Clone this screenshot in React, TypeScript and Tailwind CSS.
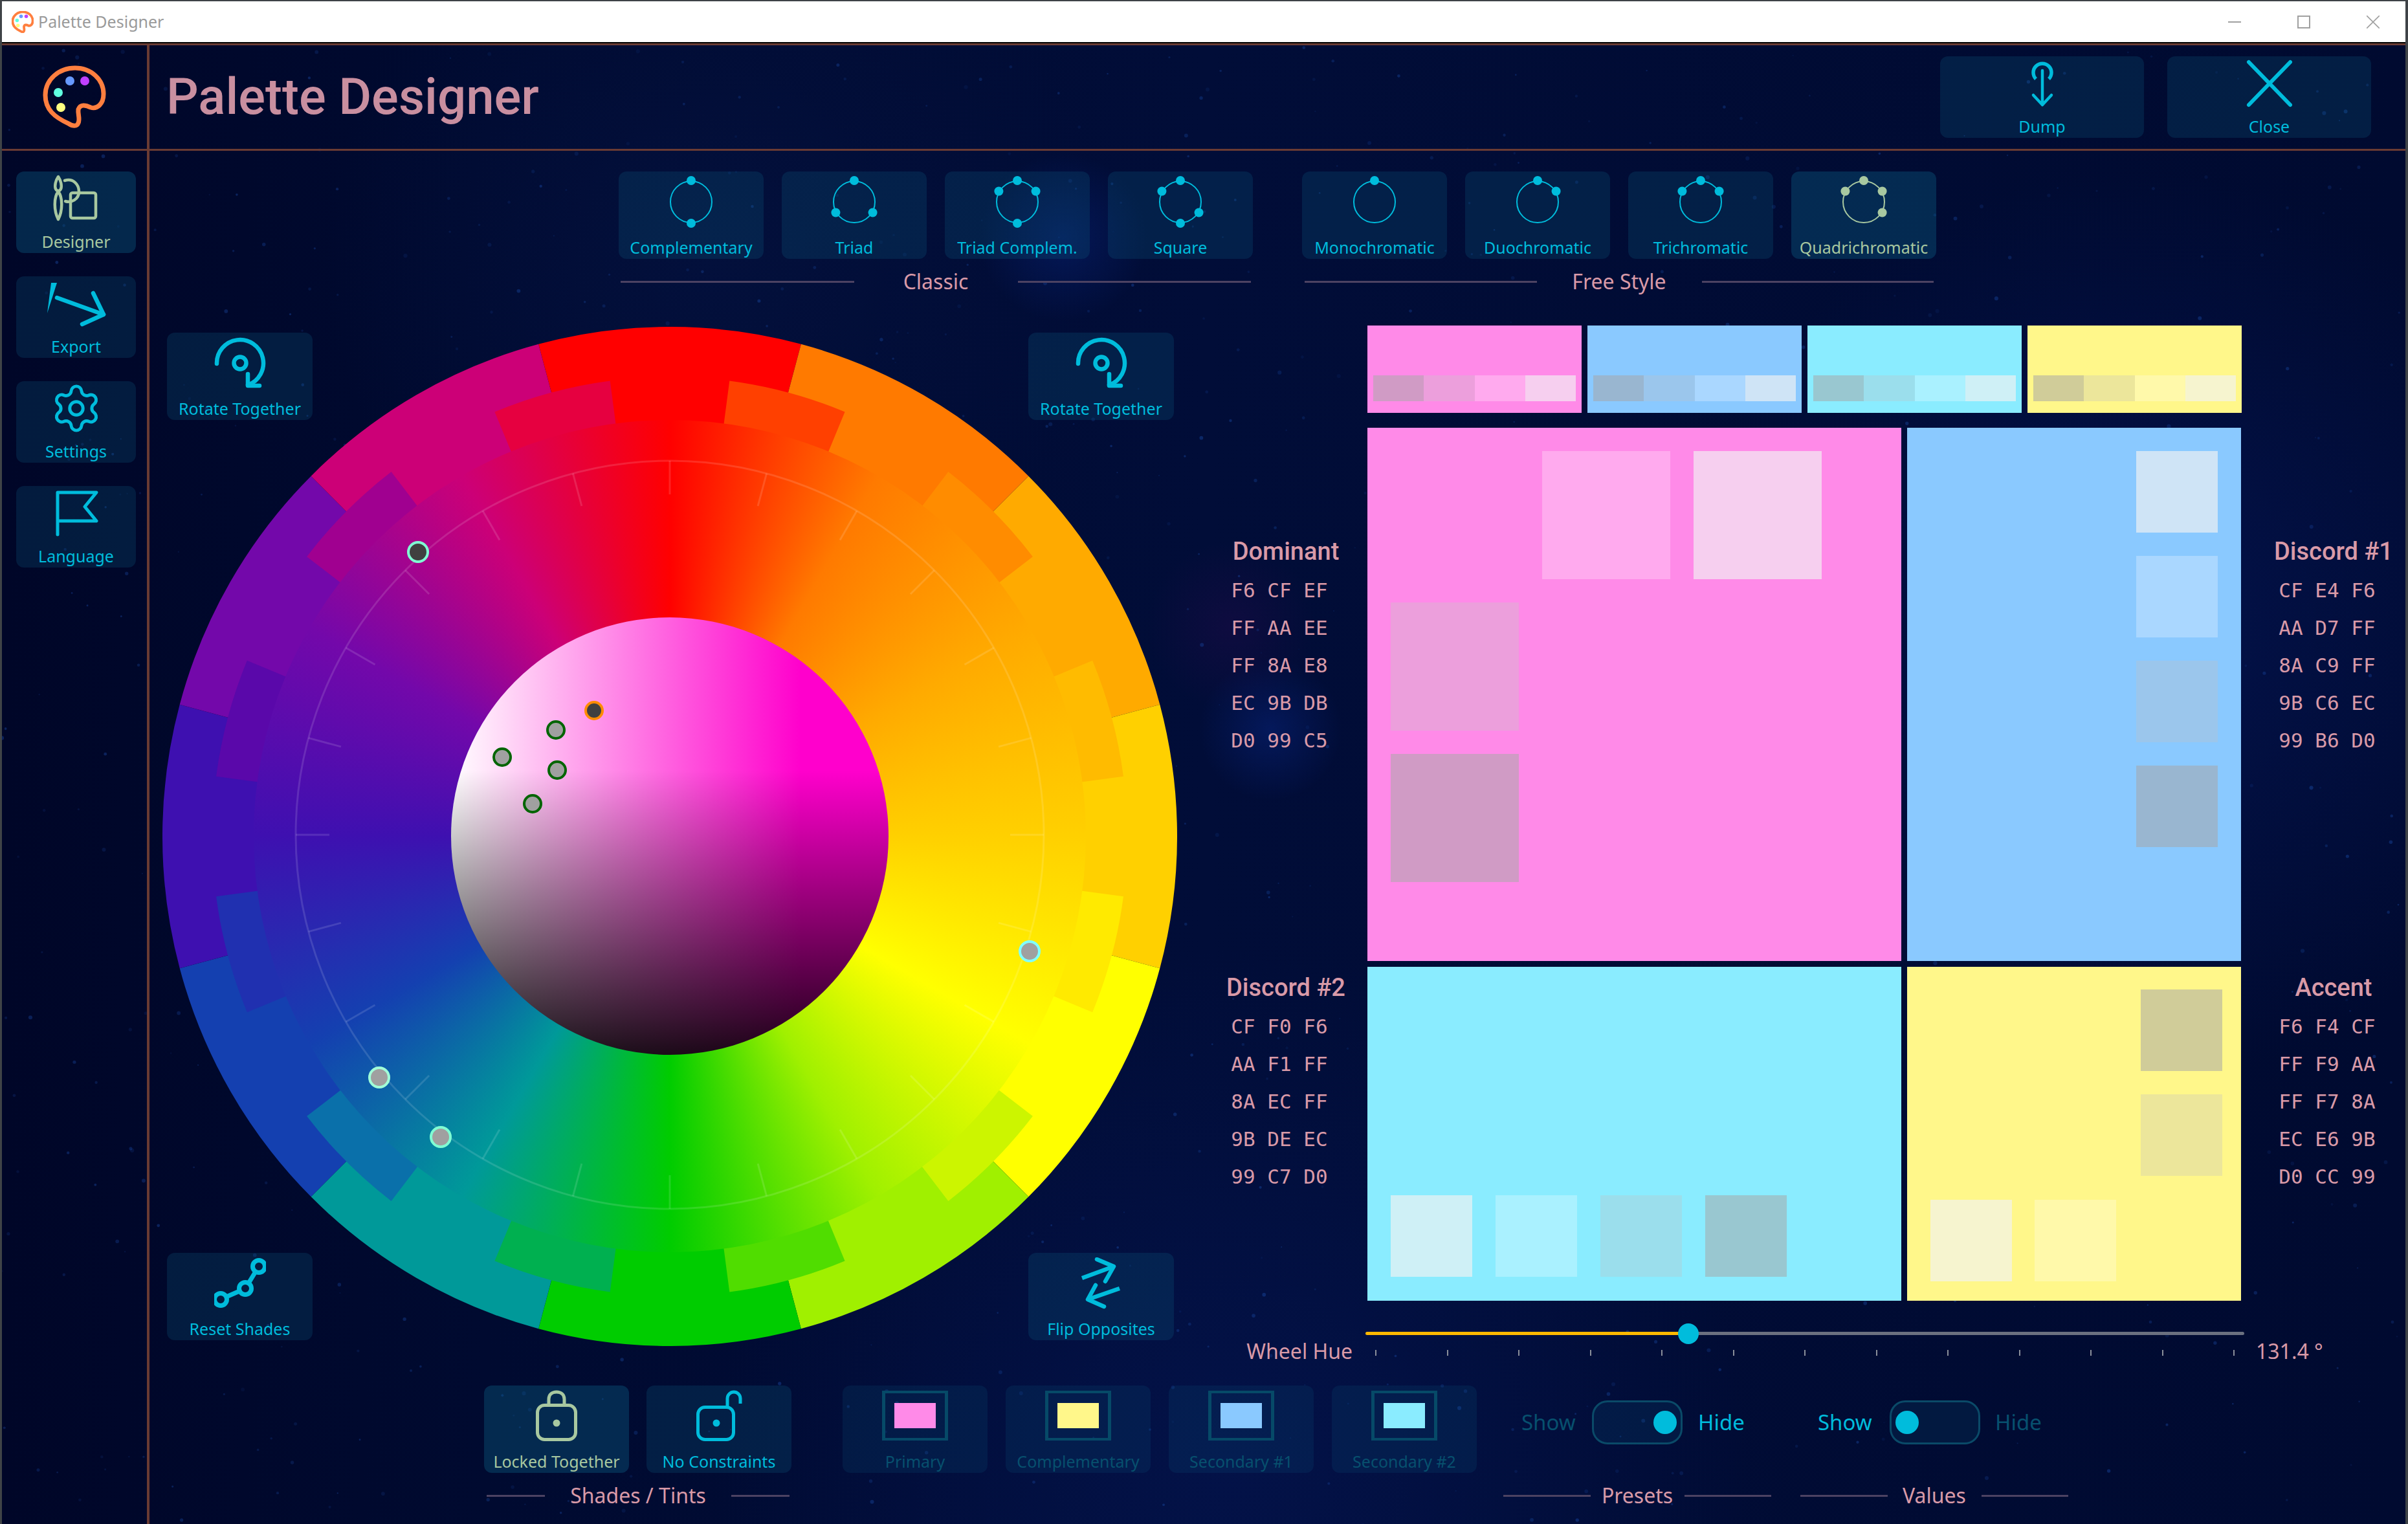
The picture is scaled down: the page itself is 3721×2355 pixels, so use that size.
import type { ReactNode } from "react";
import { Settings } from "lucide-react";

const CYAN = "#00bcdc";
const SAGE = "#a8c8a0";

const OUTER = ["#ff0000", "#ff7a00", "#ffaa00", "#ffd000", "#ffff00", "#a0f000", "#00cc00", "#009999", "#1440b0", "#3e10b0", "#7308aa", "#cc0077"];
const MID = ["#ff4000", "#ff8c00", "#ffbb00", "#ffea00", "#ccf500", "#50dd00", "#00b050", "#0a70aa", "#2030b0", "#5a08aa", "#a00090", "#e60040"];

const SHADES = {
  pink: ["#d09bc5", "#ec9fdc", "#ffaaee", "#f6cfef"],
  blue: ["#99b6d0", "#9bc6ec", "#aad7ff", "#cfe4f6"],
  cyan: ["#99c7d0", "#9bdeec", "#aaf1ff", "#cff0f6"],
  yellow: ["#d0cc99", "#ece69b", "#fff9aa", "#f6f4cf"],
};

const polar = (r: number, deg: number) => {
  const a = ((deg - 90) * Math.PI) / 180;
  return `${(784 + r * Math.cos(a)).toFixed(2)} ${(784 + r * Math.sin(a)).toFixed(2)}`;
};

const sector = (r0: number, r1: number, from: number, to: number) =>
  `M${polar(r0, from)} A${r0} ${r0} 0 0 1 ${polar(r0, to)} L${polar(r1, to)} A${r1} ${r1} 0 0 0 ${polar(r1, from)} Z`;

const STARS = (() => {
  let seed = 7331;
  const rnd = () => {
    seed = (seed * 16807) % 2147483647;
    return seed / 2147483647;
  };
  return Array.from({ length: 900 }).map(() => ({
    x: rnd() * 3721,
    y: rnd() * 2290,
    r: 1 + rnd() * 2.2,
    o: 0.1 + rnd() * 0.3,
  }));
})();

function Logo() {
  return (
    <svg width="98" height="98" viewBox="0 0 98 98" fill="none">
      <path d="M50 4C75 4 94 22 94 44C94 60 84 68 74 65C66 61 58 60 55 68C54 76 58 82 55 89C53 95 46 94 40 90C18 80 4 68 4 46C4 22 25 4 50 4Z" stroke="#ff7f3f" strokeWidth="7" />
      <ellipse cx="42" cy="24" rx="7" ry="7" fill="#6699ff" />
      <ellipse cx="65" cy="24" rx="7" ry="7" fill="#c040ff" />
      <ellipse cx="24" cy="42" rx="7" ry="7" fill="#60ffe0" />
      <ellipse cx="28" cy="65" rx="7" ry="7" fill="#ffff80" />
    </svg>
  );
}

function Icon({ children, color = CYAN, sw = 6 }: { children: ReactNode; color?: string; sw?: number }) {
  return (
    <svg width="80" height="80" viewBox="0 0 80 80" fill="none" stroke={color} strokeWidth={sw} strokeLinecap="round" strokeLinejoin="round">
      {children}
    </svg>
  );
}

function Harmony({ dots, color = CYAN }: { dots: number[]; color?: string }) {
  return (
    <svg width="80" height="80" viewBox="0 0 80 80" fill="none">
      <circle cx="40" cy="40" r="32" stroke={color} strokeWidth="2" />
      {dots.map(d => {
        const a = ((d - 90) * Math.PI) / 180;
        return <circle key={d} cx={40 + 33 * Math.cos(a)} cy={40 + 33 * Math.sin(a)} r="7" fill={color} />;
      })}
    </svg>
  );
}

function Btn({ label, icon, w = "w-[224px]", h = "h-[135px]", active, dim }: { label: string; icon: ReactNode; w?: string; h?: string; active?: boolean; dim?: boolean }) {
  const bg = active ? "bg-[#0a5a80]/40" : dim ? "bg-[#0a5a80]/18" : "bg-[#0a5a80]/25";
  const text = active ? "text-[#a8c8a0]" : dim ? "text-[#07506e]" : "text-[#00bcdc]";
  return (
    <div className={`${w} ${h} ${bg} ${text} shrink-0 rounded-[12px] flex flex-col items-center pb-[2px]`}>
      <div className="flex-1 flex items-center justify-center pb-[8px]">{icon}</div>
      <span className="h-[32px] leading-[32px] text-[25px] whitespace-nowrap">{label}</span>
    </div>
  );
}

function SectionLabel({ label, gap, className = "" }: { label: string; gap: string; className?: string }) {
  return (
    <div className={`flex items-center h-[40px] mt-[15px] ${className}`}>
      <div className="flex-1 h-[3px] bg-[#4c4262]" />
      <span className={`${gap} text-center text-[32px] text-[#d99aa8] whitespace-nowrap`}>{label}</span>
      <div className="flex-1 h-[3px] bg-[#4c4262]" />
    </div>
  );
}

function Hex({ title, rows, side }: { title: string; rows: string[]; side: "left" | "right" }) {
  return (
    <div className={`flex flex-col items-center text-[#d99aa8] ${side === "left" ? "w-[219px] pr-[33px]" : "w-[253px] pl-[33px]"}`}>
      <span className="h-[58px] leading-[58px] text-[38px] font-medium font-['Roboto',sans-serif] whitespace-nowrap">{title}</span>
      <div className="mt-[2px] mr-[20px] font-['DejaVu_Sans_Mono',monospace] text-[31px]">
        {rows.map(r => (
          <div key={r} className="h-[58px] leading-[58px] whitespace-pre">{r}</div>
        ))}
      </div>
    </div>
  );
}

function Chip({ color, size = "w-[198px] h-[198px]" }: { color: string; size?: string }) {
  return <div className={size} style={{ backgroundColor: color }} />;
}

function SmallSwatch({ base, shades }: { base: string; shades: string[] }) {
  return (
    <div className="w-[331px] h-[135px] flex items-end px-[9px] pb-[18px]" style={{ backgroundColor: base }}>
      {shades.map(s => (
        <div key={s} className="flex-1 h-[40px]" style={{ backgroundColor: s }} />
      ))}
    </div>
  );
}

function Swatch({ color }: { color: string }) {
  return (
    <div className="w-[102px] h-[77px] border-x-[5px] border-y-[4px] border-[#064a68] flex items-center justify-center">
      <div className="w-[64px] h-[39px]" style={{ backgroundColor: color }} />
    </div>
  );
}

function Toggle({ on }: { on: boolean }) {
  return (
    <div className={`w-[140px] h-[68px] rounded-[24px] border-[3px] border-[#0a4a68] bg-[#0a5a80]/18 flex items-center px-[6px] ${on ? "justify-end" : "justify-start"}`}>
      <div className="w-[36px] h-[36px] rounded-full bg-[#00bcdc]" />
    </div>
  );
}

function RotateIcon() {
  return (
    <Icon sw={6.5}>
      <path d="M4 41A36 36 0 1 1 52 74" />
      <circle cx="40" cy="40" r="9.5" />
      <path d="M52 57V75H70" />
    </Icon>
  );
}

function Lock({ open, color }: { open?: boolean; color: string }) {
  return (
    <svg width="80" height="80" viewBox="0 0 80 80" fill="none" stroke={color} strokeWidth="5">
      {open ? (
        <path d="M53 26V13C53 7 58 3 63 3C68 3 73 7 73 13V21" />
      ) : (
        <path d="M28 24V14C28 7 33 3 40 3C47 3 52 7 52 14V24" />
      )}
      <rect x={open ? 7.5 : 10.5} y={open ? 26.5 : 23.5} width={open ? 55 : 59} height={open ? 50 : 53} rx="11" />
      <circle cx={open ? 36 : 40} cy="51" r="5.5" fill={color} stroke="none" />
    </svg>
  );
}

function Wheel() {
  const ticks = Array.from({ length: 24 }).map((_, i) => i * 15);
  const handles: [number, number, string, string, number][] = [
    [395, 347, "#80ffd4", "#404040", 15],
    [1340, 964, "#80ffff", "#a0a0a0", 15],
    [335, 1159, "#a0ffd8", "#a0a0a0", 15],
    [430, 1251, "#80ffd4", "#a0a0a0", 15],
    [667, 592, "#ff8c00", "#404040", 13],
    [608, 622, "#006400", "#a0a0a0", 13],
    [525, 664, "#006400", "#a0a0a0", 13],
    [610, 684, "#006400", "#a0a0a0", 13],
    [572, 736, "#006400", "#a0a0a0", 13],
  ];
  return (
    <div className="relative w-[1568px] h-[1568px] shrink-0 ml-[20px] mt-[5px]">
      <svg className="absolute left-0 top-[-3px]" width="1568" height="1575" viewBox="0 0 1568 1568" preserveAspectRatio="none">
        {OUTER.map((c, i) => (
          <path key={c} d={sector(784, 630, i * 30 - 15, i * 30 + 15)} fill={c} />
        ))}
        {MID.map((c, i) => (
          <path key={c} d={sector(707, 630, i * 30 + 7.5, i * 30 + 22.5)} fill={c} />
        ))}
      </svg>
      <div className="absolute inset-[141px] rounded-full bg-[conic-gradient(#ff0000,#ff7a00_30deg,#ffaa00_60deg,#ffd000_90deg,#ffff00_120deg,#a0f000_150deg,#00cc00_180deg,#009999_210deg,#1440b0_240deg,#3e10b0_270deg,#7308aa_300deg,#cc0077_330deg,#ff0000)]" />
      <div className="absolute inset-[446px] rounded-full bg-[linear-gradient(to_bottom,transparent_35%,#000000_108%),linear-gradient(to_right,#ffffff_0%,#ff00cc_80%)]" />
      <svg className="absolute left-0 top-[-2px]" width="1568" height="1568" viewBox="0 0 1568 1568" fill="none">
        <circle cx="784" cy="784" r="578" stroke="#ffffff" strokeOpacity="0.13" strokeWidth="3" />
        {ticks.map(t => {
          const [x0, y0] = polar(578, t).split(" ");
          const [x1, y1] = polar(526, t).split(" ");
          return <line key={t} x1={x0} y1={y0} x2={x1} y2={y1} stroke="#ffffff" strokeOpacity="0.13" strokeWidth="3" />;
        })}
        {handles.map(([x, y, stroke, fill, r]) => (
          <circle key={`${x}-${y}`} cx={x} cy={y} r={r} fill={fill} stroke={stroke} strokeWidth="4" />
        ))}
      </svg>
      <div className="absolute left-[7px] top-[6px]">
        <Btn w="w-[225px]" label="Rotate Together" icon={<RotateIcon />} />
      </div>
      <div className="absolute right-[5px] top-[6px]">
        <Btn w="w-[225px]" label="Rotate Together" icon={<RotateIcon />} />
      </div>
      <div className="absolute left-[7px] bottom-[5px]">
        <Btn w="w-[225px]" label="Reset Shades" icon={
          <Icon sw={7}>
            <circle cx="69" cy="14" r="9.5" />
            <circle cx="48" cy="48" r="9.5" />
            <circle cx="10" cy="65" r="9.5" />
            <path d="M64 22L53 40M39.3 52L18.7 61" strokeLinecap="butt" />
          </Icon>
        } />
      </div>
      <div className="absolute right-[5px] bottom-[5px]">
        <Btn w="w-[225px]" label="Flip Opposites" icon={
          <Icon sw={6.5}>
            <path d="M10 32L59 14" strokeLinecap="butt" />
            <path d="M33 3L59 14L46 37" />
            <path d="M68 48L19 65" strokeLinecap="butt" />
            <path d="M31 43L19 65L44 76" />
          </Icon>
        } />
      </div>
    </div>
  );
}

export default function App() {
  return (
    <div className="w-[3721px] h-[2355px] overflow-hidden flex flex-col bg-[#000a30] border-t-[2px] border-l-[3px] border-r-[4px] border-[#3f4347] font-['Noto_Sans',sans-serif]">
      <div className="h-[63px] bg-white flex items-center shrink-0 relative">
        <svg className="ml-[15px]" width="34" height="34" viewBox="0 0 98 98" fill="none">
          <path d="M50 4C75 4 94 22 94 44C94 60 84 68 74 65C66 61 58 60 55 68C54 76 58 82 55 89C53 95 46 94 40 90C18 80 4 68 4 46C4 22 25 4 50 4Z" stroke="#ff7f3f" strokeWidth="11" />
          <circle cx="42" cy="24" r="8" fill="#6699ff" />
          <circle cx="65" cy="24" r="8" fill="#c040ff" />
          <circle cx="24" cy="42" r="8" fill="#60ffe0" />
          <circle cx="28" cy="65" r="8" fill="#ffff80" />
        </svg>
        <span className="ml-[7px] text-[25px] text-[#9a9a9a] whitespace-nowrap">Palette Designer</span>
        <div className="ml-auto flex items-center gap-[87px] pr-[40px]">
          <div className="w-[20px] h-[2px] bg-[#a0a0a0]" />
          <div className="w-[20px] h-[20px] border-2 border-[#a0a0a0]" />
          <svg width="20" height="20" viewBox="0 0 20 20" stroke="#a0a0a0" strokeWidth="1.6">
            <path d="M0 0L20 20M20 0L0 20" />
          </svg>
        </div>
      </div>
      <div className="h-[2px] bg-black shrink-0" />

      <div className="flex-1 flex flex-col relative min-h-0">
        <div className="absolute inset-0 bg-[radial-gradient(circle_at_1640px_300px,#0b2f9a55_0,transparent_130px),radial-gradient(circle_at_1960px_1060px,#0a2a9066_0,transparent_110px),radial-gradient(circle_at_1900px_900px,#2a0a5055_0,transparent_130px),radial-gradient(circle_at_1100px_330px,#03103c_0,transparent_600px),radial-gradient(circle_at_3300px_900px,#03124a_0,transparent_700px),radial-gradient(circle_at_1900px_2200px,#031248_0,transparent_800px),linear-gradient(to_right,#000628,#000a30_20%,#010d38_50%,#000a30)]" />
        <svg className="absolute inset-0" width="3714" height="2290" viewBox="0 0 3714 2290">
          {STARS.map((s, i) => (
            <circle key={i} cx={s.x} cy={s.y} r={s.r} fill="#1c4fae" opacity={s.o} />
          ))}
        </svg>

        <div className="relative h-[3px] bg-[#6a3b33] shrink-0" />
        <div className="relative h-[160px] shrink-0 flex items-start">
          <div className="w-[228px] h-full border-r-[4px] border-[#6a3b33] flex items-center justify-center shrink-0">
            <Logo />
          </div>
          <h1 className="ml-[26px] self-center font-['Roboto',sans-serif] font-medium text-[78px] leading-none text-[#c98fa0] whitespace-nowrap">Palette Designer</h1>
          <div className="ml-auto flex gap-[36px] pt-[17px] pr-[53px]">
            <Btn w="w-[315px]" h="h-[126px]" label="Dump" icon={
              <Icon sw={4.5}>
                <path d="M30 33A14 14 0 1 1 50 33" strokeWidth="5.5" strokeLinecap="butt" />
                <path d="M40 20V73M26 58L40 73L54 58" />
              </Icon>
            } />
            <Btn w="w-[315px]" h="h-[126px]" label="Close" icon={
              <Icon sw={6}>
                <path d="M8 7L72 73M72 7L8 73" />
              </Icon>
            } />
          </div>
        </div>
        <div className="relative h-[3px] bg-[#6a3b33] shrink-0" />

        <div className="relative flex-1 flex min-h-0">
          <aside className="w-[228px] shrink-0 border-r-[4px] border-[#6a3b33] flex flex-col items-start gap-[36px] pt-[32px] pl-[22px]">
            <Btn w="w-[185px]" h="h-[126px]" active label="Designer" icon={
              <Icon color={SAGE} sw={4.5}>
                <path d="M12 6C8 12 6 20 8 25C10 29 14 29 16 25C18 20 16 12 12 6Z" />
                <path d="M12 29C5 38 5 58 12 72C19 58 19 38 12 29Z" />
                <rect x="31" y="31" width="39" height="39" rx="3" />
                <path d="M22 12C35 8 44 18 44 29C44 41 32 47 23 44" />
              </Icon>
            } />
            <Btn w="w-[185px]" h="h-[126px]" label="Export" icon={
              <svg width="92" height="80" viewBox="0 0 92 80" fill="none" stroke={CYAN} strokeWidth="6.5" strokeLinecap="round" strokeLinejoin="round">
                <polygon points="7,8 16,8 1,55" fill={CYAN} stroke="none" />
                <path d="M16 31L88 57" />
                <path d="M72 24L88 57L55 72" />
              </svg>
            } />
            <Btn w="w-[185px]" h="h-[126px]" label="Settings" icon={<Settings size={82} strokeWidth={1.45} color={CYAN} />} />
            <Btn w="w-[185px]" h="h-[126px]" label="Language" icon={
              <Icon sw={5}>
                <path d="M11 73V8H71L53 30L71 52H11" />
              </Icon>
            } />
          </aside>

          <main className="flex-1 flex flex-col min-w-0">
            <div className="pt-[32px] pl-[725px] flex gap-[76px]">
              <div className="w-[980px] flex flex-col">
                <div className="flex gap-[28px]">
                  <Btn label="Complementary" icon={<Harmony dots={[0, 180]} />} />
                  <Btn label="Triad" icon={<Harmony dots={[0, 120, 240]} />} />
                  <Btn label="Triad Complem." icon={<Harmony dots={[0, 60, 180, 300]} />} />
                  <Btn label="Square" icon={<Harmony dots={[0, 120, 180, 300]} />} />
                </div>
                <SectionLabel label="Classic" gap="w-[253px]" className="mx-[3px]" />
              </div>
              <div className="w-[980px] flex flex-col">
                <div className="flex gap-[28px]">
                  <Btn label="Monochromatic" icon={<Harmony dots={[0]} />} />
                  <Btn label="Duochromatic" icon={<Harmony dots={[0, 60]} />} />
                  <Btn label="Trichromatic" icon={<Harmony dots={[0, 60, 300]} />} />
                  <Btn active label="Quadrichromatic" icon={<Harmony color={SAGE} dots={[0, 60, 120, 300]} />} />
                </div>
                <SectionLabel label="Free Style" gap="w-[255px]" className="mx-[4px]" />
              </div>
            </div>

            <div className="mt-[48px] h-[1638px] shrink-0 flex items-start">
              <Wheel />
              <div className="ml-[75px] flex flex-col">
                <div className="ml-[219px] flex gap-[9px]">
                  <SmallSwatch base="#ff8ae8" shades={SHADES.pink} />
                  <SmallSwatch base="#8ac9ff" shades={SHADES.blue} />
                  <SmallSwatch base="#8aecff" shades={SHADES.cyan} />
                  <SmallSwatch base="#fff78a" shades={SHADES.yellow} />
                </div>

                <div className="mt-[23px] flex h-[824px]">
                  <div className="pt-[162px]">
                    <Hex side="left" title="Dominant" rows={["F6 CF EF", "FF AA EE", "FF 8A E8", "EC 9B DB", "D0 99 C5"]} />
                  </div>
                  <div className="w-[825px] bg-[#ff8ae8] flex flex-col items-start gap-[36px] pt-[36px] pl-[36px] pr-[123px]">
                    <div className="self-end flex gap-[36px]">
                      <Chip color="#ffaaee" />
                      <Chip color="#f6cfef" />
                    </div>
                    <Chip color="#ec9fdc" />
                    <Chip color="#d09bc5" />
                  </div>
                  <div className="ml-[9px] w-[516px] bg-[#8ac9ff] flex flex-col items-end gap-[36px] pt-[36px] pr-[36px]">
                    <Chip color="#cfe4f6" size="w-[126px] h-[126px]" />
                    <Chip color="#aad7ff" size="w-[126px] h-[126px]" />
                    <Chip color="#9bc6ec" size="w-[126px] h-[126px]" />
                    <Chip color="#99b6d0" size="w-[126px] h-[126px]" />
                  </div>
                  <div className="pt-[162px]">
                    <Hex side="right" title="Discord #1" rows={["CF E4 F6", "AA D7 FF", "8A C9 FF", "9B C6 EC", "99 B6 D0"]} />
                  </div>
                </div>

                <div className="mt-[9px] flex h-[516px]">
                  <div className="pt-[3px]">
                    <Hex side="left" title="Discord #2" rows={["CF F0 F6", "AA F1 FF", "8A EC FF", "9B DE EC", "99 C7 D0"]} />
                  </div>
                  <div className="w-[825px] bg-[#8aecff] flex items-end gap-[36px] pl-[36px] pb-[37px]">
                    <Chip color="#cff0f6" size="w-[126px] h-[126px]" />
                    <Chip color="#aaf1ff" size="w-[126px] h-[126px]" />
                    <Chip color="#9bdeec" size="w-[126px] h-[126px]" />
                    <Chip color="#99c7d0" size="w-[126px] h-[126px]" />
                  </div>
                  <div className="ml-[9px] w-[516px] bg-[#fff78a] flex flex-col justify-between">
                    <div className="self-end flex flex-col gap-[36px] mt-[35px] mr-[29px]">
                      <Chip color="#d0cc99" size="w-[126px] h-[126px]" />
                      <Chip color="#ece69b" size="w-[126px] h-[126px]" />
                    </div>
                    <div className="flex gap-[35px] ml-[36px] mb-[30px]">
                      <Chip color="#f6f4cf" size="w-[126px] h-[126px]" />
                      <Chip color="#fff9aa" size="w-[126px] h-[126px]" />
                    </div>
                  </div>
                  <div className="pt-[3px]">
                    <Hex side="right" title="Accent" rows={["F6 F4 CF", "FF F9 AA", "FF F7 8A", "EC E6 9B", "D0 CC 99"]} />
                  </div>
                </div>

                <div className="flex items-start pt-[48px]">
                  <span className="w-[216px] pr-[20px] mt-[10px] text-right h-[40px] leading-[40px] text-[32px] text-[#d99aa8] whitespace-nowrap">Wheel Hue</span>
                  <div className="w-[1358px] relative">
                    <div className="h-[5px] rounded-full flex overflow-hidden">
                      <div className="w-[499px] bg-[#ffb800]" />
                      <div className="flex-1 bg-[#6b7080]" />
                    </div>
                    <div className="absolute left-[483px] top-[-13px] w-[32px] h-[32px] rounded-full bg-[#00bcdc]" />
                    <div className="flex justify-between px-[15px] mt-[23px]">
                      {Array.from({ length: 13 }).map((_, i) => (
                        <div key={i} className="w-[2px] h-[9px] bg-[#8a8f9a]" />
                      ))}
                    </div>
                  </div>
                  <span className="ml-[18px] mt-[10px] h-[40px] leading-[40px] text-[32px] text-[#d99aa8] whitespace-nowrap">131.4 °</span>
                </div>
              </div>
            </div>

            <div className="pl-[517px] flex items-start">
              <div className="w-[476px] flex flex-col">
                <div className="flex gap-[27px]">
                  <Btn active label="Locked Together" icon={<Lock color={SAGE} />} />
                  <Btn label="No Constraints" icon={<Lock open color={CYAN} />} />
                </div>
                <SectionLabel label="Shades / Tints" gap="w-[288px]" className="mx-[4px]" />
              </div>
              <div className="ml-[78px] flex gap-[28px]">
                <Btn dim label="Primary" icon={<Swatch color="#ff8ae8" />} />
                <Btn dim label="Complementary" icon={<Swatch color="#fff78a" />} />
                <Btn dim label="Secondary #1" icon={<Swatch color="#8ac9ff" />} />
                <Btn dim label="Secondary #2" icon={<Swatch color="#8aecff" />} />
              </div>
              <div className="ml-[41px] w-[414px] flex flex-col">
                <div className="h-[135px] pb-[22px] pl-[28px] flex items-center text-[33px]">
                  <span className="w-[109px] text-[#07506e]">Show</span>
                  <Toggle on />
                  <span className="ml-[24px] text-[#00bcdc]">Hide</span>
                </div>
                <SectionLabel label="Presets" gap="w-[145px]" />
              </div>
              <div className="ml-[45px] w-[414px] flex flex-col">
                <div className="h-[135px] pb-[22px] pl-[27px] flex items-center text-[33px]">
                  <span className="w-[111px] text-[#00bcdc]">Show</span>
                  <Toggle on={false} />
                  <span className="ml-[23px] text-[#07506e]">Hide</span>
                </div>
                <SectionLabel label="Values" gap="w-[145px]" />
              </div>
            </div>
          </main>
        </div>
      </div>
    </div>
  );
}
